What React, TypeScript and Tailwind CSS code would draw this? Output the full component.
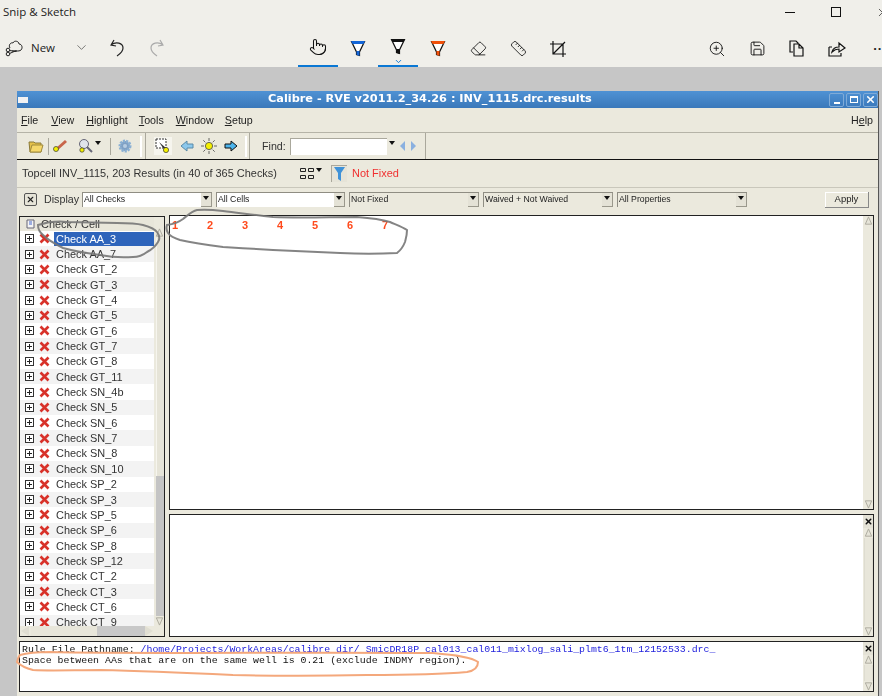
import { X, ChevronDown, ZoomIn, Save, Eraser, Ruler, Pointer } from "lucide-react";

const checks = [
  "Check AA_3", "Check AA_7", "Check GT_2", "Check GT_3", "Check GT_4", "Check GT_5", "Check GT_6",
  "Check GT_7", "Check GT_8", "Check GT_11", "Check SN_4b", "Check SN_5", "Check SN_6", "Check SN_7",
  "Check SN_8", "Check SN_10", "Check SP_2", "Check SP_3", "Check SP_5", "Check SP_6", "Check SP_8",
  "Check SP_12", "Check CT_2", "Check CT_3", "Check CT_6", "Check CT_9",
];

const Pen = ({ color, tip }: { color: string; tip: string }) => (
  <svg width="16" height="18" viewBox="0 0 16 18">
    <path d="M1.5 1.5h13L9.5 12v3.5l-3-1V12z" fill="#fff" stroke="#111" strokeWidth="1.2" />
    <path d="M1 1h14l-1.5 3h-11z" fill={color} />
    <path d="M6.5 11h3v5l-3-1.2z" fill={tip} />
  </svg>
);

const TreeBox = () => (
  <span className="flex h-[9px] w-[9px] shrink-0 items-center justify-center border border-[#333] bg-white">
    <svg width="7" height="7" viewBox="0 0 7 7"><path d="M1 3.5h5M3.5 1v5" stroke="#222" strokeWidth="1" /></svg>
  </span>
);

const RedX = () => (
  <svg width="11" height="11" viewBox="0 0 11 11" className="shrink-0">
    <path d="M1.5 1.5l8 8M9.5 1.5l-8 8" stroke="#d8322a" strokeWidth="2.6" />
  </svg>
);

const Combo = ({ label, white, w }: { label: string; white?: boolean; w: string }) => (
  <div className={`flex h-[15px] items-center border-t border-l border-[#8f8d83] ${w} ${white ? "bg-white" : "bg-[#ebe9dd]"}`}>
    <span className="flex-1 truncate pl-[1px] text-[8.7px] text-[#222]">{label}</span>
    <span className="flex h-[14px] w-[11px] items-start justify-center border-r border-b border-[#9a988c] bg-[#e4e2d6] pt-[3px]">
      <span className="h-0 w-0 border-x-[3px] border-t-[4px] border-x-transparent border-t-[#111]" />
    </span>
  </div>
);

const ScrollArrow = ({ down }: { down?: boolean }) => (
  <svg width="9" height="10" viewBox="0 0 9 11" className="shrink-0">
    <path d={down ? "M1 2h7L4.5 10z" : "M1 9h7L4.5 1z"} fill="#e6e4d8" stroke="#aaa89c" />
  </svg>
);

const PaneScroll = () => (
  <div className="flex w-[10px] shrink-0 flex-col items-center bg-[#ebe9dd]">
    <div className="flex h-[13px] w-full items-center justify-center bg-[#e4e2d6]">
      <X size={9} strokeWidth={4} color="#111" />
    </div>
    <ScrollArrow />
    <div className="w-[9px] flex-1 border-x border-[#dedcd0] bg-[#e8e6da]" />
    <ScrollArrow down />
  </div>
);

export default function App() {
  return (
    <div className="relative flex h-[696px] w-[882px] flex-col overflow-hidden bg-[#c6c6c6] font-['Liberation_Sans',sans-serif]">
      {/* snip & sketch chrome */}
      <div className="h-[67px] shrink-0 bg-[#f0efea] text-[#222]">
        <div className="flex h-[24px] items-center">
          <span className="flex-1 pl-[3px] font-['Open_Sans',sans-serif] text-[11.5px]">Snip &amp; Sketch</span>
          <span className="mr-[36px] h-px w-[10px] bg-[#111]" />
          <span className="mr-[35px] h-[10px] w-[10px] border border-[#111]" />
          <X size={13} strokeWidth={1.2} className="mr-[-7px]" color="#111" />
        </div>
        <div className="flex h-[43px]">
          <div className="flex w-[298px] shrink-0 items-center pt-[4px]">
            <svg width="18" height="18" viewBox="0 0 18 18" fill="none" stroke="#222" strokeWidth="1" className="ml-[5px]">
              <path d="M5 9c-2-3 1-6 3-5 1-3 6-2 6 1 3 0 4 4 2 6-1 1-3 1-4 1H7" />
              <circle cx="3" cy="11" r="1.8" /><circle cx="3" cy="15" r="1.8" /><path d="M4.5 11.5l7 1M4.5 14.5l7-3" />
            </svg>
            <span className="ml-[8px] font-['Open_Sans',sans-serif] text-[11.5px]">New</span>
            <ChevronDown size={15} strokeWidth={1} className="ml-[19px]" color="#333" />
            <svg width="18" height="18" viewBox="0 0 18 18" fill="none" stroke="#222" strokeWidth="1.2" className="ml-[19px]">
              <path d="M6 1L3 6l5 1M3 6c5-4 12-2 12 3 0 4-3 6-6 8" />
            </svg>
            <svg width="18" height="18" viewBox="0 0 18 18" fill="none" stroke="#aaa" strokeWidth="1.2" className="ml-[22px]">
              <path d="M12 1l3 5-5 1M15 6c-5-4-12-2-12 3 0 4 3 6 6 8" />
            </svg>
          </div>
          <div className="flex shrink-0">
            <div className="flex h-full w-[40px] items-center justify-center border-b-2 border-[#0a78d4] pt-[4px]"><Pointer size={18} strokeWidth={1.4} color="#111" /></div>
            <div className="flex h-full w-[40px] items-center justify-center pt-[6px]"><Pen color="#1466d8" tip="#1466d8" /></div>
            <div className="relative flex h-full w-[40px] items-center justify-center border-b-2 border-[#0a78d4] pt-[4px]">
              <Pen color="#111" tip="#111" />
              <ChevronDown size={9} strokeWidth={2.5} color="#0a78d4" className="absolute bottom-[-1px] left-[15.5px]" />
            </div>
            <div className="flex h-full w-[40px] items-center justify-center pt-[6px]"><Pen color="#f0500a" tip="#f0500a" /></div>
            <div className="flex h-full w-[40px] items-center justify-center pt-[6px]"><Eraser size={17} strokeWidth={1.2} color="#111" /></div>
            <div className="flex h-full w-[40px] items-center justify-center pt-[6px]"><Ruler size={17} strokeWidth={1.2} color="#111" /></div>
            <div className="flex h-full w-[40px] items-center justify-center pt-[6px]">
              <svg width="18" height="18" viewBox="0 0 18 18" fill="none" stroke="#111" strokeWidth="1.2"><path d="M4 1v13h13M1 4h13v13M4 14L16 2" /></svg>
            </div>
          </div>
          <div className="ml-[119px] flex shrink-0">
            <div className="flex h-full w-[40px] items-center justify-center pt-[6px]"><ZoomIn size={18} strokeWidth={1.2} color="#111" /></div>
            <div className="flex h-full w-[40px] items-center justify-center pt-[6px]"><Save size={17} strokeWidth={1.3} color="#111" /></div>
            <div className="flex h-full w-[40px] items-center justify-center pt-[6px]">
              <svg width="16" height="17" viewBox="0 0 16 17" fill="none" stroke="#111" strokeWidth="1.2"><path d="M4 12H1V1h6l2 2v1M5 4h5l4 4v8H5zM10 4v4h4" /></svg>
            </div>
            <div className="flex h-full w-[40px] items-center justify-center pt-[6px]">
              <svg width="18" height="16" viewBox="0 0 18 16" fill="none" stroke="#111" strokeWidth="1.2"><path d="M1 6v9h12v-3M1 6h3M4 11c1-4 4-5 7-5V2l6 5-6 4V8c-3 0-5 1-7 3z" /></svg>
            </div>
            <div className="flex h-full w-[25px] items-center justify-end pt-[6px] text-[13px] font-bold leading-none">··</div>
          </div>
        </div>
      </div>

      {/* calibre window */}
      <div className="ml-[17px] mr-[3px] mt-[24px] flex h-[605px] flex-col border-r border-[#555] bg-[#ebe9dd] blur-[0.4px]">
        <div className="flex h-[17px] shrink-0 items-center bg-gradient-to-b from-[#4f92d4] to-[#3a78ba]">
          <span className="ml-[1px] h-[6px] w-[10px] bg-[#f2f2f2]" />
          <span className="flex-1 pl-[240px] font-['DejaVu_Sans',sans-serif] text-[11.3px] font-bold text-white">Calibre - RVE v2011.2_34.26 : INV_1115.drc.results</span>
          <div className="flex gap-[2px]">
            <span className="flex h-[14px] w-[15px] items-end justify-center rounded-[2px] border border-[#7fabd8] pb-[2px]"><span className="h-[2px] w-[6px] bg-white" /></span>
            <span className="flex h-[14px] w-[15px] items-center justify-center rounded-[2px] border border-[#7fabd8]"><span className="h-[7px] w-[8px] border border-t-2 border-white" /></span>
            <span className="flex h-[14px] w-[15px] items-center justify-center rounded-[2px] border border-[#7fabd8]"><X size={11} strokeWidth={3.5} color="#fff" /></span>
          </div>
        </div>

        {/* menu bar */}
        <div className="flex h-[25px] shrink-0 items-center border-b border-[#b5b3a7] pl-[4px] pr-[5px] text-[10.7px] text-[#222]">
          <span className="mr-[13px]"><u>F</u>ile</span>
          <span className="mr-[12px]"><u>V</u>iew</span>
          <span className="mr-[11px]"><u>H</u>ighlight</span>
          <span className="mr-[12px]"><u>T</u>ools</span>
          <span className="mr-[11px]"><u>W</u>indow</span>
          <span className="flex-1"><u>S</u>etup</span>
          <span>H<u>e</u>lp</span>
        </div>

        {/* icon toolbar */}
        <div className="flex h-[27px] shrink-0 items-center border-b border-[#111]">
          <div className="flex h-full items-center border-r border-[#aaa89c] pl-[11px] pr-[3px]">
            <svg width="16" height="14" viewBox="0 0 16 14">
              <path d="M1 3h5l1 1h6v9H2z" fill="#e5c14a" stroke="#8a7a3a" /><path d="M2 13l2-7h11l-2 7z" fill="#f5d76a" stroke="#a08a3a" />
            </svg>
            <span className="ml-[4px] h-[17px] w-px bg-[#aaa89c]" />
            <svg width="18" height="16" viewBox="0 0 18 16" className="ml-[2px]">
              <path d="M6 11L15 3" stroke="#c8654a" strokeWidth="3" /><circle cx="5" cy="11" r="2.5" fill="#f4f000" stroke="#333" strokeWidth=".7" />
            </svg>
            <svg width="16" height="16" viewBox="0 0 16 16" className="ml-[8px]">
              <circle cx="7" cy="6" r="4.5" fill="#dfe3ea" stroke="#667" /><path d="M10 9l5 5" stroke="#667" strokeWidth="2" /><circle cx="5" cy="12" r="2.2" fill="#f4f000" stroke="#333" strokeWidth=".7" />
            </svg>
            <span className="ml-[2px] mb-[7px] h-0 w-0 border-x-[3px] border-t-[4px] border-x-transparent border-t-[#111]" />
            <span className="ml-[9px] h-[17px] w-px bg-[#aaa89c]" />
            <svg width="14" height="14" viewBox="0 0 14 14" className="ml-[7px]">
              <circle cx="7" cy="7" r="5" fill="#7fa0c4" stroke="#8ab0d4" strokeWidth="3" strokeDasharray="2 1" /><circle cx="7" cy="7" r="2" fill="#b7cde2" />
            </svg>
            <span className="ml-[8px] h-[21px] w-[2px] bg-white" />
          </div>
          <div className="flex h-full items-center border-r border-[#aaa89c] pl-[8px] pr-[2px]">
            <span className="flex h-[18px] w-[18px] items-center justify-center bg-[#f6f5ee]">
              <svg width="16" height="17" viewBox="0 0 16 17">
                <path d="M1 1h10v9H1z" fill="#fff" stroke="#333" strokeDasharray="2 1" /><path d="M4 4l7 6-3 0z" fill="#333" /><circle cx="11" cy="12" r="2.6" fill="#f4f000" stroke="#333" strokeWidth=".7" />
              </svg>
            </span>
            <svg width="14" height="12" viewBox="0 0 14 12" className="ml-[8px]">
              <path d="M1 6l6-5v3h6v4H7v3z" fill="#8cc8ec" stroke="#5a8aa8" />
            </svg>
            <svg width="16" height="16" viewBox="0 0 16 16" className="ml-[7px]">
              <circle cx="8" cy="8" r="3.6" fill="#f4f000" stroke="#444" strokeWidth=".8" />
              <path d="M8 0v3M8 13v3M0 8h3M13 8h3M2.3 2.3l2 2M11.7 11.7l2 2M2.3 13.7l2-2M11.7 4.3l2-2" stroke="#444" strokeWidth=".8" />
            </svg>
            <svg width="14" height="12" viewBox="0 0 14 12" className="ml-[7px]">
              <path d="M13 6L7 1v3H1v4h6v3z" fill="#4cb4ec" stroke="#111" />
            </svg>
            <span className="ml-[7px] h-[21px] w-[2px] bg-white" />
          </div>
          <div className="flex h-full items-center border-r border-[#aaa89c] pl-[12px] pr-[9px]">
            <span className="text-[10.7px] text-[#333]">Find:</span>
            <span className="ml-[4px] h-[17px] w-[97px] border-t border-l border-[#aaa89c] bg-white" />
            <span className="ml-[2px] mb-[7px] h-0 w-0 border-x-[3px] border-t-[4px] border-x-transparent border-t-[#111]" />
            <span className="ml-[5px] h-0 w-0 border-y-[5px] border-r-[5px] border-y-transparent border-r-[#8ab0e0]" />
            <span className="ml-[6px] h-0 w-0 border-y-[5px] border-l-[5px] border-y-transparent border-l-[#8ab0e0]" />
          </div>
        </div>

        {/* results summary */}
        <div className="flex h-[27px] shrink-0 items-center pl-[5px] text-[10.95px] text-[#333]">
          <span className="w-[277px]">Topcell INV_1115, 203 Results (in 40 of 365 Checks)</span>
          <svg width="16" height="13" viewBox="0 0 16 13" fill="none" stroke="#222"><path d="M1.5 1.5h5v3h-5zM9.5 1.5h5v3h-5zM1.5 8.5h5v3h-5zM9.5 8.5h5v3h-5z" /></svg>
          <span className="ml-[1px] mb-[7px] h-0 w-0 border-x-[3px] border-t-[4px] border-x-transparent border-t-[#111]" />
          <span className="ml-[9px] flex h-[17px] w-[16px] items-center justify-center border-l border-t border-[#aaa89c] bg-[#e6e4d8]">
            <svg width="11" height="14" viewBox="0 0 11 14"><path d="M0 0h11L7 6v8L4 12V6z" fill="#3f92d8" /></svg>
          </span>
          <span className="ml-[5px] text-[#f03030]">Not Fixed</span>
        </div>

        {/* filter bar */}
        <div className="flex h-[28px] shrink-0 items-center border-t border-[#c9c7bb] pb-[4px] pl-[7px] pr-[9px]">
          <span className="flex h-[13px] w-[13px] items-center justify-center rounded-[2px] border border-[#555] bg-[#e6e4d8]"><X size={9} strokeWidth={3} color="#222" /></span>
          <span className="ml-[7px] mr-[3px] text-[10.7px] text-[#333]">Display</span>
          <div className="flex flex-1 gap-[4px]">
            <Combo label="All Checks" white w="w-[130px]" />
            <Combo label="All Cells" white w="w-[129px]" />
            <Combo label="Not Fixed" w="w-[130px]" />
            <Combo label="Waived + Not Waived" w="w-[130px]" />
            <Combo label="All Properties" w="w-[130px]" />
          </div>
          <button className="h-[16px] w-[44px] border-r border-b border-[#888] bg-[#ebe9dd] text-[9.5px] text-[#222] shadow-[inset_1px_1px_0_#fff]">Apply</button>
        </div>

        {/* panes */}
        <div className="flex h-[422px] shrink-0 gap-[4px] pl-[2px] pr-[4px]">
          <div className="mt-px flex w-[146px] flex-col border border-[#222] bg-[#ebe9dd]">
            <div className="flex min-h-0 flex-1">
              <div className="flex w-[134px] flex-col bg-white">
                <div className="flex h-[14px] shrink-0 items-center bg-[#e8e6da] pl-[6px] text-[10.95px] text-[#333]">
                  <svg width="10" height="11" viewBox="0 0 10 11" className="mr-[5px]"><path d="M1 1h7v8H1z" fill="#f4f4f4" stroke="#667" /><path d="M3 3h3M3 5h3" stroke="#46c" /></svg>
                  Check / Cell
                </div>
                <div className="flex-1 overflow-hidden">
                  {checks.map((name, i) => (
                    <div key={name} className={`flex h-[15.35px] items-center pl-[5px] ${i % 2 === 1 ? "bg-[#f3f3f3]" : "bg-white"}`}>
                      <TreeBox />
                      <span className="ml-[5px]"><RedX /></span>
                      <span className={`ml-[4px] flex-1 pl-[2px] text-[10.95px] leading-[14px] ${i === 0 ? "bg-[#2e64bb] text-white" : "text-[#333]"}`}>{name}</span>
                    </div>
                  ))}
                </div>
              </div>
              <div className="ml-[1px] flex w-[9px] flex-col items-center pt-[11px]">
                <ScrollArrow />
                <div className="flex w-[8px] flex-1 flex-col">
                  <div className="h-[238px] border-l border-[#f6f5ee] bg-[#e6e4d8]" />
                  <div className="flex-1 bg-[#c4c4c4]" />
                </div>
                <ScrollArrow down />
              </div>
            </div>
            <div className="flex h-[10px] shrink-0 items-center">
              <span className="ml-[1px] h-0 w-0 border-y-[5px] border-r-[8px] border-y-transparent border-r-[#e0ded2]" />
              <div className="ml-[2px] h-[10px] w-[66px] bg-[#e8e6da]" />
              <div className="h-full w-[48px] bg-[#c8c8c8]" />
              <span className="h-0 w-0 border-y-[5px] border-l-[8px] border-y-transparent border-l-[#e0ded2]" />
            </div>
          </div>

          <div className="flex flex-1 flex-col gap-[4px]">
            <div className="flex h-[295px] border border-[#222] bg-white">
              <div className="flex flex-1 items-start pl-[2px] pt-[2px] text-[11px] font-bold leading-[14px] text-[#ff4a1c]">
                {["1", "2", "3", "4", "5", "6", "7"].map((n) => (
                  <span key={n} className="w-[35px]">{n}</span>
                ))}
              </div>
              <div className="flex w-[10px] flex-col items-center justify-between bg-[#ebe9dd]">
                <ScrollArrow />
                <ScrollArrow down />
              </div>
            </div>
            <div className="flex flex-1 border border-[#222] bg-white">
              <div className="flex-1" />
              <PaneScroll />
            </div>
          </div>
        </div>

        {/* rule text */}
        <div className="ml-[2px] mr-[4px] mt-[4px] flex h-[51px] border border-[#222] bg-white">
          <div className="flex-1 pl-[2px] pt-[2px] font-['Liberation_Mono',monospace] text-[9.9px] leading-[11px] text-[#111]">
            <div>Rule File Pathname: <span className="text-[#2222dd]">/home/Projects/WorkAreas/calibre_dir/_SmicDR18P_cal013_cal011_mixlog_sali_plmt6_1tm_12152533.drc_</span></div>
            <div>Space between AAs that are on the same well is 0.21 (exclude INDMY region).</div>
          </div>
          <PaneScroll />
        </div>
      </div>

      {/* hand-drawn annotations on top of the capture */}
      <svg width="882" height="696" viewBox="0 0 882 696" fill="none" className="absolute left-0 top-0 blur-[0.4px]">
        <path d="M38 225C48 222 58 221 67 222L117 223C127 223 135 223 143 225C150 227 155 229 157 232C160 236 160 239 158 242C155 247 151 250 147 252C142 256 138 257 133 257C120 258 110 257 100 255C85 253 73 251 63 248C53 243 47 239 43 235C40 232 38 230 38 225Z" stroke="#777" strokeWidth="2" opacity="0.9" />
        <path d="M167 225C174 224 179 222 183 219C188 215 192 211 197 210C207 209 215 210 223 211C240 213 255 215 273 217C300 218 330 217 357 217C370 218 380 219 390 222C397 225 403 227 407 230C407 235 406 238 405 242C403 247 401 250 397 253C378 254 360 254 340 253C318 252 295 251 273 250C255 249 240 248 223 247C208 245 194 243 180 240C174 238 170 236 168 233C166 230 166 228 167 225Z" stroke="#777" strokeWidth="2" opacity="0.9" />
        <path d="M17 662C18 658 19 656 20 655C30 652 40 652 50 652C130 654 300 652 433 653C455 655 472 657 478 662C478 668 473 671 467 672C435 675 400 675 367 675C320 676 275 676 233 675C190 673 145 671 100 670C75 670 50 671 33 670C25 668 20 665 17 662Z" stroke="#f4a87c" strokeWidth="2" />
      </svg>
    </div>
  );
}
